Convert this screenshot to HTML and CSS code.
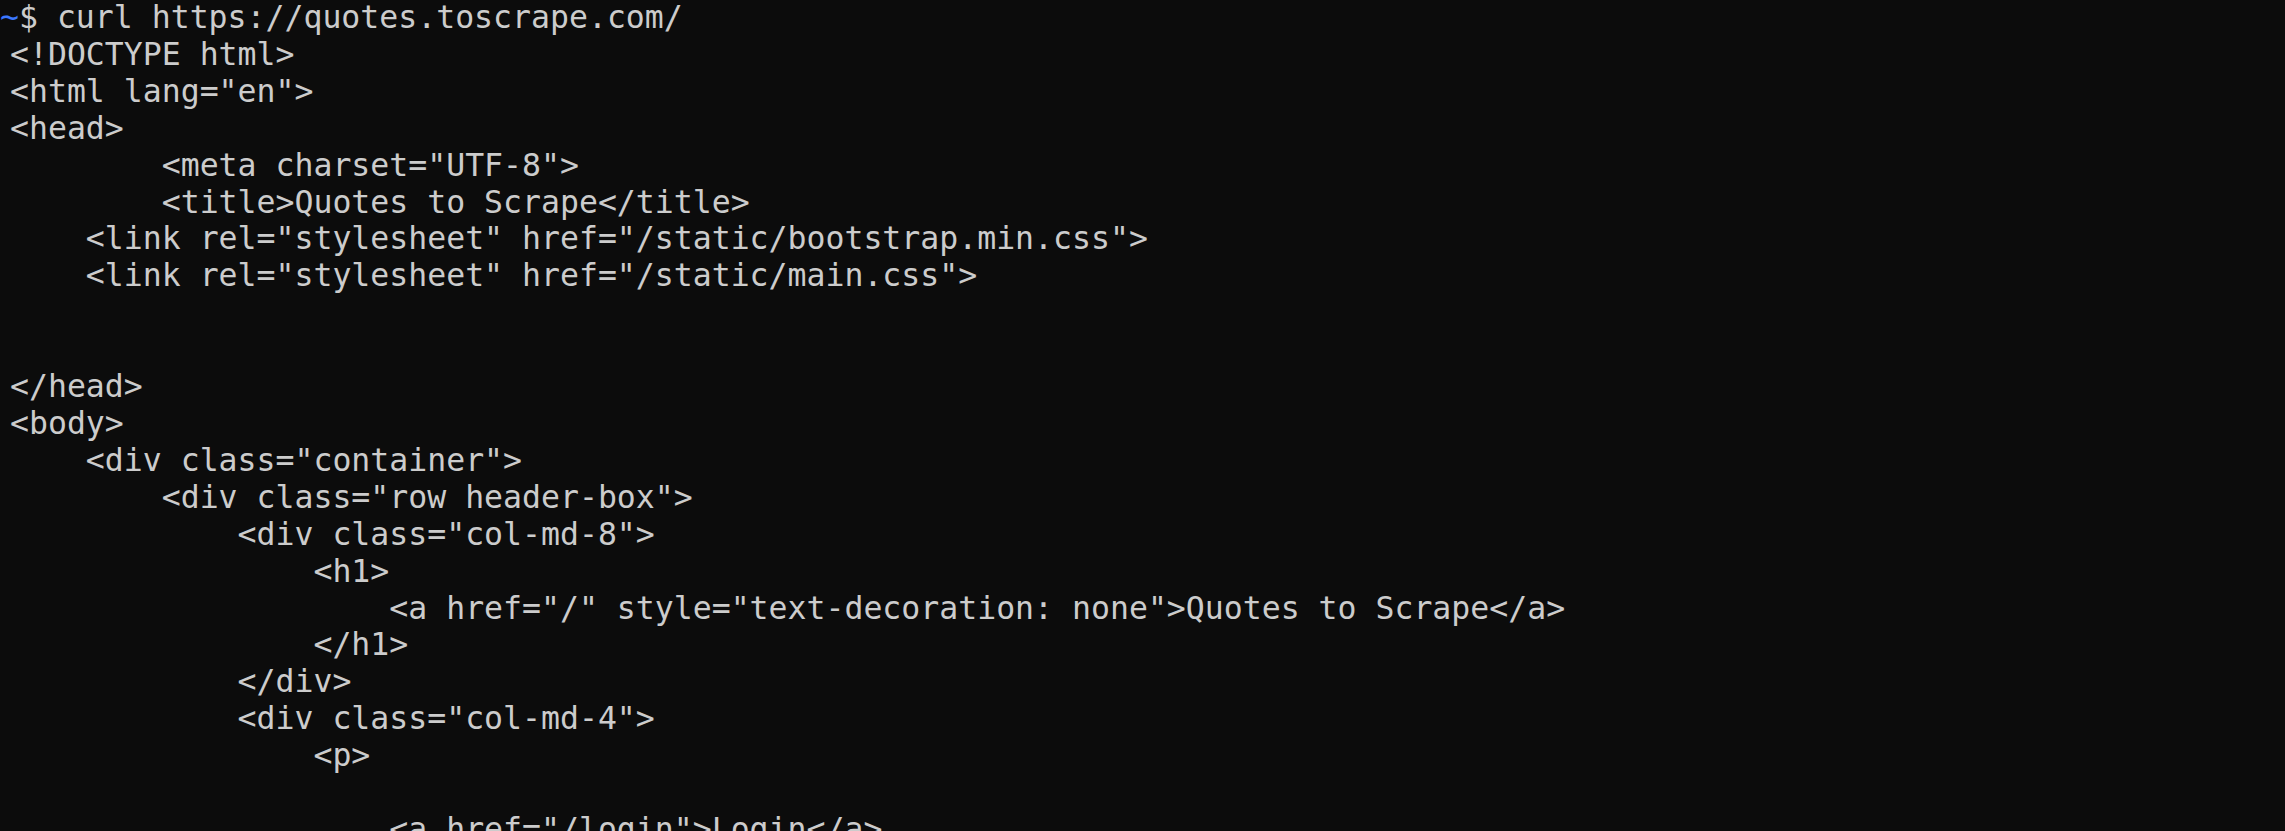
FILE: index.html
```html
<!DOCTYPE html>
<html lang="en">
<head>
<meta charset="UTF-8">
<title>Terminal</title>
<link rel="stylesheet" href="styles.css">
</head>
<body>
<main class="terminal">
<pre class="line prompt-line"><span class="prompt-dir">~</span><span class="prompt-sign">$</span> curl https://quotes.toscrape.com/</pre>
<pre class="line output">&lt;!DOCTYPE html&gt;
&lt;html lang="en"&gt;
&lt;head&gt;
        &lt;meta charset="UTF-8"&gt;
        &lt;title&gt;Quotes to Scrape&lt;/title&gt;
    &lt;link rel="stylesheet" href="/static/bootstrap.min.css"&gt;
    &lt;link rel="stylesheet" href="/static/main.css"&gt;


&lt;/head&gt;
&lt;body&gt;
    &lt;div class="container"&gt;
        &lt;div class="row header-box"&gt;
            &lt;div class="col-md-8"&gt;
                &lt;h1&gt;
                    &lt;a href="/" style="text-decoration: none"&gt;Quotes to Scrape&lt;/a&gt;
                &lt;/h1&gt;
            &lt;/div&gt;
            &lt;div class="col-md-4"&gt;
                &lt;p&gt;

                    &lt;a href="/login"&gt;Login&lt;/a&gt;
</pre>
</main>
</body>
</html>
```
FILE: styles.css
```css
html, body {
  margin: 0;
  padding: 0;
  background: #0c0c0c;
  height: 100%;
  overflow: hidden;
}

.terminal {
  display: flex;
  flex-direction: column;
  margin-top: -1px;
}

.line {
  margin: 0;
  font-family: "DejaVu Sans Mono", "Liberation Mono", monospace;
  font-size: 31.5px;
  line-height: 36.9px;
  color: #cccccc;
  white-space: pre;
}

.output {
  padding-left: 10px;
}

.prompt-dir {
  color: #3b78ff;
}

.prompt-sign {
  color: #cccccc;
}
```
